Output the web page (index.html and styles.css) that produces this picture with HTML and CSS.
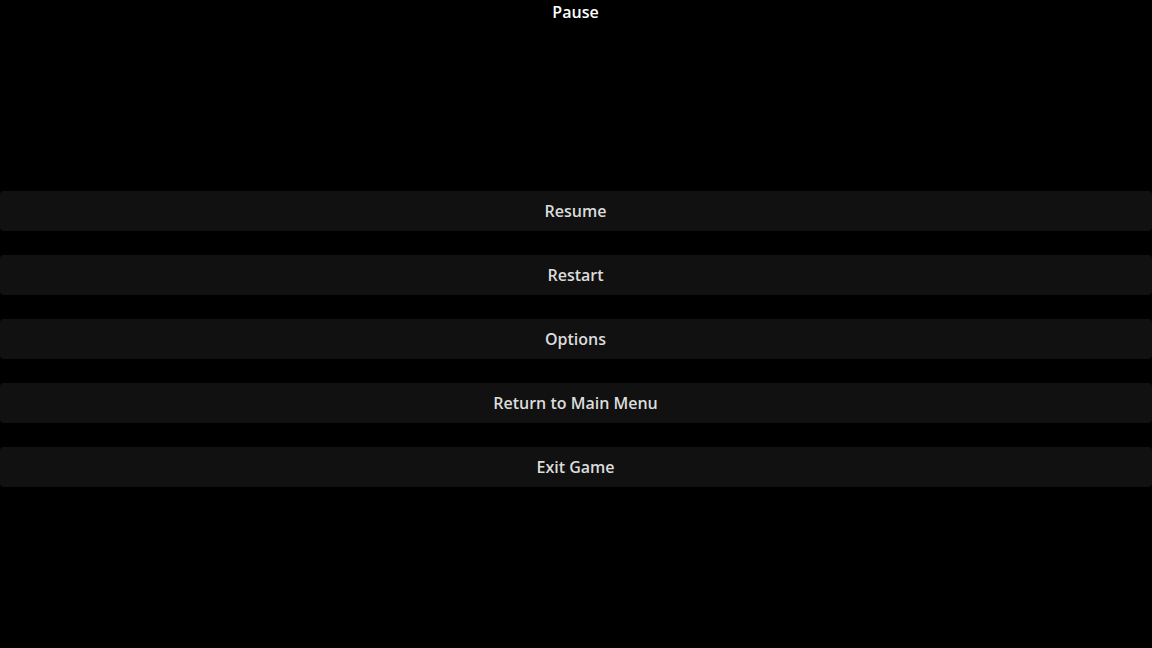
FILE: index.html
```html
<!DOCTYPE html>
<html>
<head>
<meta charset="utf-8">
<link rel="stylesheet" href="styles.css">
</head>
<body>
<div class="screen">
  <h1 class="title">Pause</h1>
  <nav class="menu">
    <button class="menu-btn">Resume</button>
    <button class="menu-btn">Restart</button>
    <button class="menu-btn">Options</button>
    <button class="menu-btn">Return to Main Menu</button>
    <button class="menu-btn">Exit Game</button>
  </nav>
</div>
</body>
</html>
```
FILE: styles.css
```css
html, body {
  margin: 0;
  padding: 0;
  background: #000;
  width: 1152px;
  height: 648px;
  overflow: hidden;
}
.screen {
  display: flex;
  flex-direction: column;
  font-family: "Open Sans", "Liberation Sans", sans-serif;
}
.title {
  margin: 0;
  padding-right: 1px;
  height: 24px;
  line-height: 24px;
  font-size: 16px;
  font-weight: 600;
  color: #fff;
  text-align: center;
}
.menu {
  margin-top: 167px;
  display: flex;
  flex-direction: column;
  gap: 24px;
}
.menu-btn {
  height: 40px;
  width: 100%;
  border: none;
  border-radius: 4px;
  background: #111111;
  color: #dcdcdc;
  font-family: inherit;
  font-size: 16px;
  font-weight: 600;
  padding: 0 1px 0 0;
  text-align: center;
}
```
